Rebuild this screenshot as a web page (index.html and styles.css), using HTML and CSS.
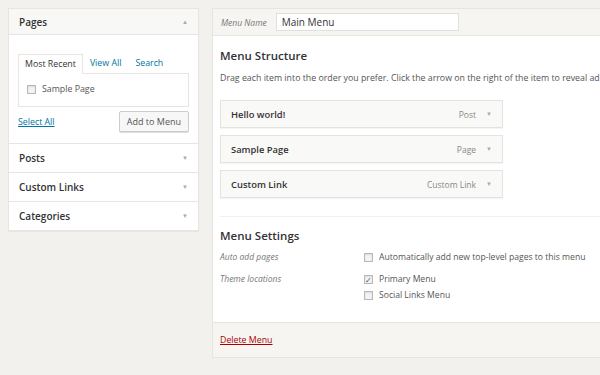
FILE: index.html
```html
<!DOCTYPE html>
<html lang="en">
<head>
    <meta charset="UTF-8">
    <title>Menus</title>
    <link rel="stylesheet" href="styles.css">
</head>
<body>
    <div class="wrap">
        <div class="sidebar">
            <div class="section open">
                <div class="section-title">
                    <span>Pages</span>
                    <span class="caret">&#9650;</span>
                </div>
                <div class="section-body">
                    <div class="tabs">
                        <span class="tab active">Most Recent</span>
                        <span class="tab">View All</span>
                        <span class="tab">Search</span>
                    </div>
                    <div class="tab-panel">
                        <label class="check"><span class="box"></span>Sample Page</label>
                    </div>
                    <div class="section-actions">
                        <a class="link">Select All</a>
                        <button class="button">Add to Menu</button>
                    </div>
                </div>
            </div>
            <div class="section">
                <div class="section-title"><span>Posts</span><span class="caret">&#9660;</span></div>
            </div>
            <div class="section">
                <div class="section-title"><span>Custom Links</span><span class="caret">&#9660;</span></div>
            </div>
            <div class="section">
                <div class="section-title"><span>Categories</span><span class="caret">&#9660;</span></div>
            </div>
        </div>

        <div class="menu-edit">
            <div class="menu-header">
                <span class="menu-name-label">Menu Name</span>
                <span class="menu-name-input">Main Menu</span>
            </div>
            <div class="menu-body">
                <h3>Menu Structure</h3>
                <p class="hint">Drag each item into the order you prefer. Click the arrow on the right of the item to reveal additional configuration options.</p>

                <ul class="menu-items">
                    <li class="menu-item">
                        <span class="item-title">Hello world!</span>
                        <span class="item-type">Post</span>
                        <span class="caret">&#9660;</span>
                    </li>
                    <li class="menu-item">
                        <span class="item-title">Sample Page</span>
                        <span class="item-type">Page</span>
                        <span class="caret">&#9660;</span>
                    </li>
                    <li class="menu-item">
                        <span class="item-title">Custom Link</span>
                        <span class="item-type">Custom Link</span>
                        <span class="caret">&#9660;</span>
                    </li>
                </ul>

                <div class="menu-settings">
                    <h3>Menu Settings</h3>
                    <div class="setting">
                        <span class="setting-label">Auto add pages</span>
                        <div class="setting-input">
                            <label class="check"><span class="box"></span>Automatically add new top-level pages to this menu</label>
                        </div>
                    </div>
                    <div class="setting">
                        <span class="setting-label">Theme locations</span>
                        <div class="setting-input">
                            <label class="check"><span class="box checked">&#10003;</span>Primary Menu</label>
                            <label class="check"><span class="box"></span>Social Links Menu</label>
                        </div>
                    </div>
                </div>
            </div>
            <div class="menu-footer">
                <a class="delete">Delete Menu</a>
            </div>
        </div>
    </div>
</body>
</html>
```

FILE: styles.css
```css
* {
    margin: 0;
    padding: 0;
    box-sizing: border-box;
}

body {
    width: 600px;
    height: 375px;
    overflow: hidden;
    background: #f2f1ed;
    color: #444;
    font-family: 'Open Sans', 'Liberation Sans', sans-serif;
    font-size: 8.8px;
}

.wrap {
    display: flex;
    align-items: flex-start;
    gap: 13px;
    padding: 8px 0 0 8px;
}

/* left column */
.sidebar {
    width: 191px;
    flex: none;
    background: #fff;
    border: 1px solid #e6e5e1;
    box-shadow: 0 1px 1px rgba(0, 0, 0, 0.04);
}

.section + .section {
    border-top: 1px solid #e6e5e1;
}

.section-title {
    display: flex;
    justify-content: space-between;
    align-items: center;
    height: 28px;
    padding: 0 10px;
    font-size: 10px;
    font-weight: 600;
    color: #333;
}

.section.open .section-title {
    height: 26px;
    background: #f8f8f6;
    border-bottom: 1px solid #e6e5e1;
}

.caret {
    font-size: 6px;
    color: #aaa;
}

.section-body {
    padding: 18px 9px 11px 9px;
}

.tabs {
    display: flex;
}

.tab {
    padding: 3px 6px 3px 6px;
    color: #0074a2;
    border: 1px solid transparent;
}

.tab.active {
    color: #333;
    border-color: #e6e5e1;
    border-bottom-color: #fff;
    background: #fff;
    position: relative;
    top: 1px;
}

.tab-panel {
    border: 1px solid #e6e5e1;
    height: 34px;
    padding: 9px 8px;
}

.check {
    display: flex;
    align-items: center;
    gap: 6px;
    color: #555;
}

.box {
    width: 9px;
    height: 9px;
    border: 1px solid #b4b9be;
    background: #f3f3f3;
    box-shadow: inset 0 1px 2px rgba(0, 0, 0, 0.1);
    font-size: 8px;
    line-height: 7px;
    color: #555;
    text-align: center;
}

.section-actions {
    display: flex;
    justify-content: space-between;
    align-items: center;
    margin-top: 4px;
}

.link {
    color: #0074a2;
    text-decoration: underline;
}

.button {
    font-family: inherit;
    font-size: 9px;
    color: #555;
    background: #f7f7f7;
    border: 1px solid #ccc;
    border-radius: 2px;
    padding: 3px 7px;
    box-shadow: 0 1px 0 #ddd;
}

/* right column */
.menu-edit {
    width: 440px;
    flex: none;
    background: #fff;
    border: 1px solid #e6e5e1;
}

.menu-header {
    display: flex;
    align-items: center;
    gap: 9px;
    height: 27px;
    padding: 0 8px;
    background: #f6f5f2;
    border-bottom: 1px solid #e6e5e1;
}

.menu-name-label {
    font-style: italic;
    color: #777;
    font-size: 8.5px;
}

.menu-name-input {
    width: 183px;
    height: 18px;
    padding: 0 5px;
    background: #fff;
    border: 1px solid #e0e0dc;
    font-size: 10px;
    line-height: 16px;
    color: #333;
}

.menu-body {
    padding: 12px 7px 0 7px;
    height: 286px;
}

h3 {
    font-size: 11.5px;
    font-weight: 600;
    color: #333;
}

.hint {
    margin-top: 9px;
    white-space: nowrap;
    color: #555;
    font-size: 8.8px;
}

.menu-items {
    list-style: none;
    margin-top: 16px;
    width: 283px;
    display: flex;
    flex-direction: column;
    gap: 7px;
}

.menu-item {
    display: flex;
    align-items: center;
    height: 28px;
    padding: 0 10px;
    background: #f9f9f8;
    border: 1px solid #e3e3e0;
    box-shadow: 0 1px 1px rgba(0, 0, 0, 0.04);
}

.item-title {
    font-weight: 600;
    color: #333;
    font-size: 9.4px;
    flex: 1;
}

.item-type {
    color: #888;
    font-size: 8.5px;
    margin-right: 10px;
}

.menu-settings {
    margin-top: 18px;
    border-top: 1px solid #f0f0ee;
    padding-top: 11px;
}

.setting {
    display: flex;
    margin-top: 8px;
}

.setting + .setting {
    margin-top: 10px;
}

.setting-label {
    width: 144px;
    font-style: italic;
    color: #777;
    font-size: 8.5px;
}

.setting-input {
    display: flex;
    flex-direction: column;
    gap: 4px;
    font-size: 8.6px;
}

.menu-footer {
    height: 35px;
    padding: 11px 7px;
    background: #f6f5f2;
    border-top: 1px solid #e6e5e1;
}

.delete {
    color: #a00;
    text-decoration: underline;
}
```
